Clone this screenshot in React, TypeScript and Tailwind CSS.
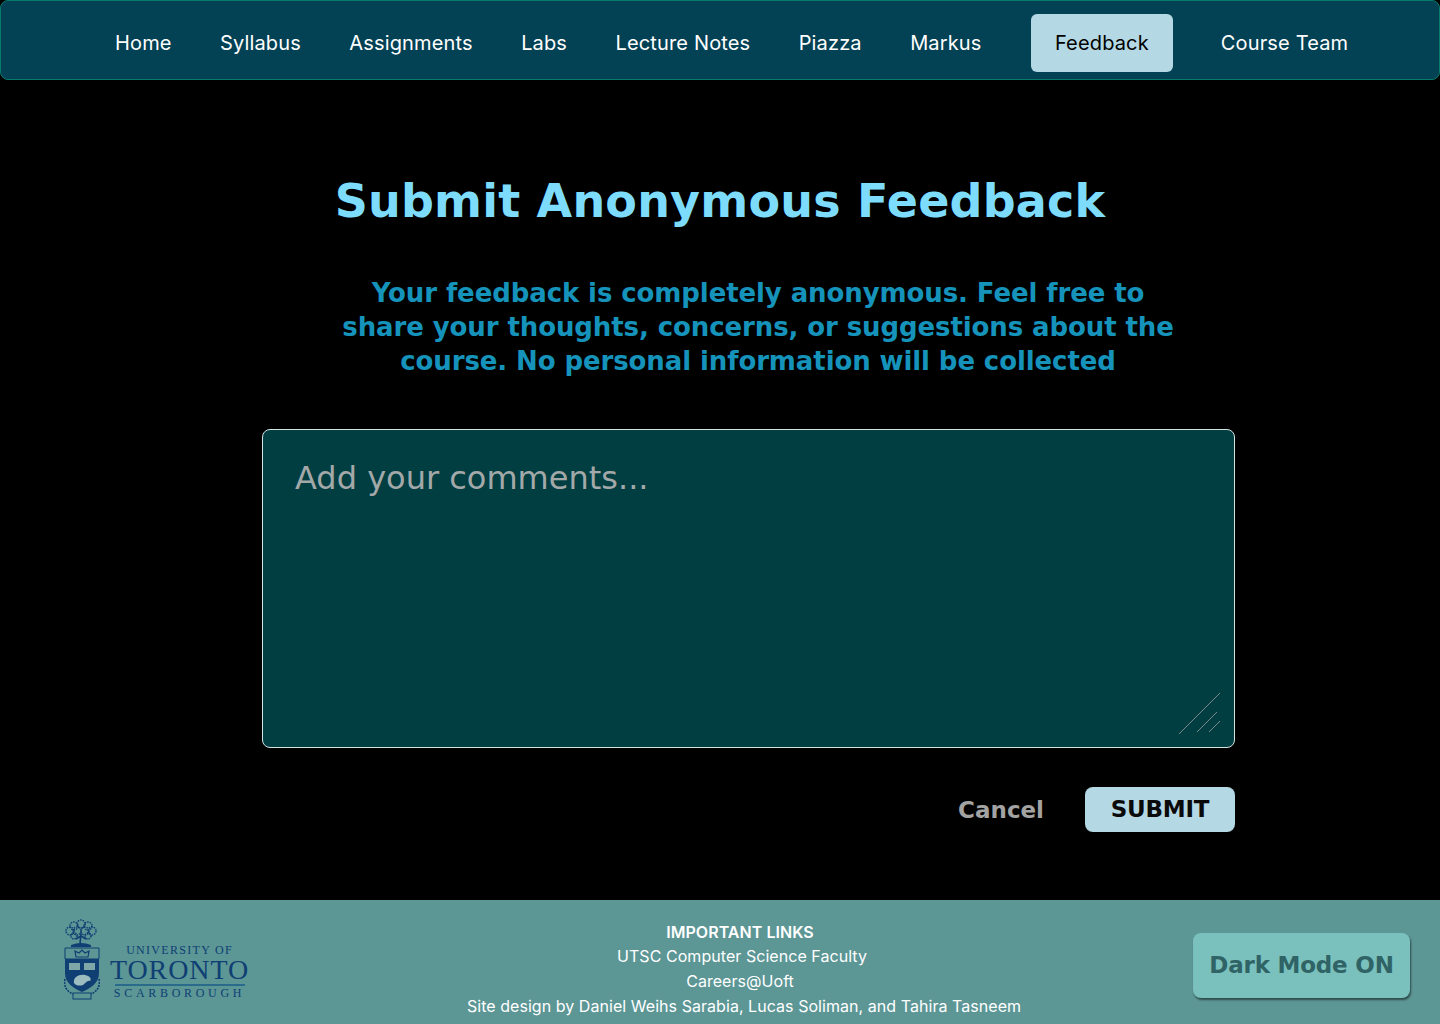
import React from 'react'

const navItems = [
  'Home',
  'Syllabus',
  'Assignments',
  'Labs',
  'Lecture Notes',
  'Piazza',
  'Markus',
  'Feedback',
  'Course Team',
]

const treeBlobs = [
  [17, 5, 4],
  [10, 7, 4],
  [24, 7, 4],
  [6, 12, 4],
  [28, 12, 4],
  [13, 12, 4],
  [21, 12, 4],
  [10, 17, 3],
  [24, 17, 3],
]

function Crest() {
  return (
    <svg width="36" height="82" viewBox="0 0 36 82" className="shrink-0">
      {treeBlobs.map(([cx, cy, r]) => (
        <circle
          key={`${cx}-${cy}`}
          cx={cx}
          cy={cy}
          r={r}
          fill="none"
          stroke="#0f3f73"
          strokeWidth="1.5"
          strokeDasharray="1.5 1"
        />
      ))}
      <path d="M17 14 L16 25 M17 17 L12 20 M17 17 L22 20" stroke="#0f3f73" strokeWidth="1.6" fill="none" />
      <path d="M7 26 Q17 22 27 26 L27 28 L7 28 Z" fill="#0f3f73" />
      <path d="M1 29 H35 V40 H1 Z" fill="none" stroke="#0f3f73" strokeWidth="1" />
      <path d="M12 38 L11 32 L15 34 L18 31 L21 34 L25 32 L24 38 Z" fill="none" stroke="#0f3f73" strokeWidth="1.2" />
      <path d="M1 40 H35 V54 C35 64 27 69 18 73 C9 69 1 64 1 54 Z" fill="#0f3f73" />
      <path d="M5 44 H16 V51 H5 Z M20 44 H31 V51 H20 Z" fill="#7fa7a8" />
      <path d="M10 64 C9 58 15 55 21 56 C26 57 28 60 26 62 C23 61 22 64 19 66 C16 67 12 67 10 64 Z" fill="#9dbcc0" />
      <path d="M1 60 C-1 68 4 73 9 75 M35 60 C37 68 32 73 27 75" fill="none" stroke="#0f3f73" strokeWidth="1.6" strokeDasharray="2 1" />
      <rect x="9" y="74" width="18" height="6" fill="none" stroke="#0f3f73" strokeWidth="1" />
    </svg>
  )
}

export default function App() {
  return (
    <div className="flex h-[1024px] w-[1440px] flex-col overflow-hidden bg-black font-['Inter',sans-serif]">
      <nav className="flex h-20 shrink-0 items-center rounded-lg border border-[#0a7a6c] bg-[#034154] pt-[5px] pl-[90px]">
        {navItems.map((item) => (
          <a
            key={item}
            className={`flex h-[58px] items-center rounded-md px-6 text-xl tracking-[0.15px] ${
              item === 'Feedback' ? 'mr-[24px] ml-[25px] bg-[#b4d8e4] text-black' : 'mr-[0.4px] text-white'
            }`}
          >
            {item}
          </a>
        ))}
      </nav>

      <main className="flex flex-1 flex-col items-center font-['DejaVu_Sans',sans-serif]">
        <h1 className="mt-[91px] text-center text-[46px] leading-[60px] font-bold tracking-[0.2px] text-[#7ddcfb]">
          Submit Anonymous Feedback
        </h1>
        <p className="mt-[45px] ml-[76px] w-[900px] text-center text-[26px] leading-[34px] font-bold tracking-[-0.1px] text-[#1593bb]">
          Your feedback is completely anonymous. Feel free to
          <br />
          share your thoughts, concerns, or suggestions about the
          <br />
          course. No personal information will be collected
        </p>
        <div className="mt-[51px] ml-[57px] flex w-[973px] flex-col gap-[39px]">
          <div className="relative h-[319px] rounded-lg border border-[#d5e3e3] bg-[#013e42] px-8 py-[26px]">
            <span className="text-[32px] leading-[44px] text-[#a3a8a8]">Add your comments...</span>
            <svg width="44" height="44" viewBox="0 0 44 44" className="absolute right-[12px] bottom-[12px]">
              <path d="M1 43 L42 2 M19 41 L39 21 M31 41 L42 30" stroke="#7d8a8a" strokeWidth="1" fill="none" />
            </svg>
          </div>
          <div className="flex items-center justify-end gap-[41px]">
            <button type="button" className="pt-[1px] text-[23px] font-bold text-[#a3a3a3]">
              Cancel
            </button>
            <button
              type="button"
              className="flex h-[45px] w-[150px] items-center justify-center rounded-lg bg-[#b4d8e4] text-[23px] font-bold tracking-[-0.2px] text-[#0a0a0a]"
            >
              SUBMIT
            </button>
          </div>
        </div>
      </main>

      <footer className="flex h-[124px] shrink-0 items-center bg-[#5c9695] pr-[30px] pl-[64px]">
        <div className="mb-[4px] flex w-[190px] shrink-0 items-start gap-[10px]">
          <Crest />
          <div className="flex flex-col items-center pt-[25px] font-['Liberation_Serif',serif] text-[#0f3f73]">
            <span className="text-[12px] leading-3 tracking-[1.3px]">UNIVERSITY OF</span>
            <span className="text-[28px] leading-[28px] tracking-[0.9px]">TORONTO</span>
            <div className="h-[2px] w-[130px] bg-[#2a6a8a]" />
            <span className="mt-[1px] text-[12px] leading-3 tracking-[3.7px]">SCARBOROUGH</span>
          </div>
        </div>
        <div className="ml-[200px] flex w-[580px] flex-col items-center pt-[14px] text-base leading-[24.7px] tracking-[0.05px] text-white">
          <strong className="mr-[8px] font-semibold">IMPORTANT LINKS</strong>
          <a className="mr-[4px]">UTSC Computer Science Faculty</a>
          <a className="mr-[8px]">Careers@Uoft</a>
          <span className="whitespace-nowrap">Site design by Daniel Weihs Sarabia, Lucas Soliman, and Tahira Tasneem</span>
        </div>
        <button
          type="button"
          className="mt-[7px] ml-auto flex h-[65px] w-[217px] items-center justify-center rounded-lg bg-[#7ac1bd] font-['DejaVu_Sans',sans-serif] text-[23px] font-bold tracking-[-0.2px] text-[#2f6365] shadow-[1px_2px_2px_rgba(0,0,0,0.5)]"
        >
          Dark Mode ON
        </button>
      </footer>
    </div>
  )
}
